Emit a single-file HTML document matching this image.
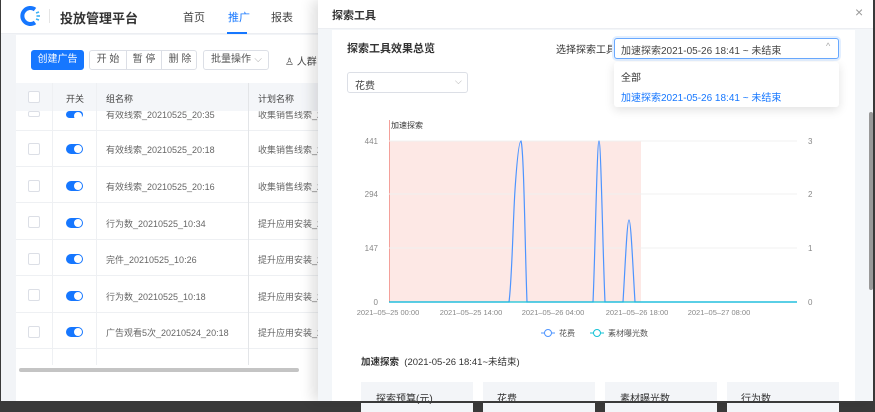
<!DOCTYPE html>
<html><head><meta charset="utf-8"><style>
*{margin:0;padding:0;box-sizing:border-box}
body{width:875px;height:403px;overflow:hidden;position:relative;background:#3a3a3a;font-family:"Liberation Sans","Noto Sans CJK SC",sans-serif;color:#333}
.a{position:absolute}
.t{position:absolute;white-space:nowrap}
.row{position:absolute;left:16px;width:302px;height:36px;border-bottom:1px solid #eef0f3;background:#fff}
.cb{position:absolute;left:28px;width:12px;height:12px;border:1px solid #dcdfe6;border-radius:2px;background:#fff}
.tg{position:absolute;left:66px;width:17px;height:10px;border-radius:5px;background:#1677ff}
.tg:after{content:"";position:absolute;right:1px;top:1px;width:8px;height:8px;border-radius:50%;background:#fff}
.btn{position:absolute;height:20px;border:1px solid #dcdfe6;border-radius:3px;background:#fff;font-size:10px;color:#555;line-height:18px;text-align:center}
.card{position:absolute;top:382px;width:112px;height:30px;background:#f3f5f8;font-size:10px;color:#333}
</style></head><body>
<div class="a" style="left:1px;top:0;width:872px;height:401px;background:#f2f4f7"></div>
<div class="a" style="left:1px;top:0;width:317px;height:34px;background:#fff;border-bottom:1px solid #eceef2"></div>
<svg class="a" style="left:19px;top:5px" width="22" height="22" viewBox="0 0 22 22"><path d="M16 4.5A8 8 0 1 0 16 17.5" fill="none" stroke="#1677ff" stroke-width="4"/><g stroke="#3ab0f5" stroke-width="1.6"><line x1="17" y1="8" x2="20" y2="7"/><line x1="17.5" y1="11" x2="21" y2="11"/><line x1="17" y1="14" x2="20" y2="15"/></g></svg>
<div class="a" style="left:49px;top:9px;width:1px;height:14px;background:#e5e5e5"></div>
<div class="t" style="left:60px;top:8px;font-size:13px;font-weight:bold;color:#333">投放管理平台</div>
<div class="t" style="left:183px;top:9px;font-size:11px;color:#444">首页</div>
<div class="t" style="left:228px;top:9px;font-size:11px;color:#1677ff">推广</div>
<div class="a" style="left:227px;top:32px;width:20px;height:2px;background:#1677ff"></div>
<div class="t" style="left:271px;top:9px;font-size:11px;color:#444">报表</div>
<div class="a" style="left:16px;top:35px;width:302px;height:366px;background:#fff"></div>
<div class="btn" style="left:31px;top:50px;width:53px;background:#1677ff;border-color:#1677ff;color:#fff">创建广告</div>
<div class="btn" style="left:89px;top:50px;width:108px"><span style="position:absolute;left:0;width:36px">开 始</span><span style="position:absolute;left:36px;width:36px;border-left:1px solid #dcdfe6;border-right:1px solid #dcdfe6">暂 停</span><span style="position:absolute;left:72px;width:36px">删 除</span></div>
<div class="btn" style="left:203px;top:50px;width:66px;text-align:left;padding-left:7px">批量操作 <span style="position:absolute;right:6px;color:#aaa">⌵</span></div>
<div class="t" style="left:285px;top:53px;font-size:10px;color:#444">♙ 人群</div>
<div class="a" style="left:16px;top:83px;width:302px;height:28px;background:#f4f6f9"></div>
<div class="cb" style="top:91px"></div>
<div class="t" style="left:66px;top:92px;font-size:9px;color:#444">开关</div>
<div class="t" style="left:106px;top:92px;font-size:9px;color:#444">组名称</div>
<div class="t" style="left:258px;top:92px;font-size:9px;color:#444">计划名称</div>
<div class="row" style="top:111px;height:20px"></div>
<div class="t" style="left:106px;top:108px;font-size:9px;color:#666;clip-path:inset(3px 0 0 0)">有效线索_20210525_20:35</div>
<div class="t" style="left:258px;top:108px;font-size:9px;color:#666;clip-path:inset(3px 0 0 0)">收集销售线索_2</div>
<div class="tg" style="top:111px;height:7px"></div>
<div class="cb" style="top:111px;height:6px"></div>
<div class="row" style="top:131px"></div><div class="cb" style="top:143px"></div><div class="tg" style="top:144px"></div><div class="t" style="left:106px;top:143px;font-size:9px;color:#666">有效线索_20210525_20:18</div><div class="t" style="left:258px;top:143px;font-size:9px;color:#666">收集销售线索_2</div>
<div class="row" style="top:167px"></div><div class="cb" style="top:180px"></div><div class="tg" style="top:181px"></div><div class="t" style="left:106px;top:180px;font-size:9px;color:#666">有效线索_20210525_20:16</div><div class="t" style="left:258px;top:180px;font-size:9px;color:#666">收集销售线索_2</div>
<div class="row" style="top:204px"></div><div class="cb" style="top:216px"></div><div class="tg" style="top:218px"></div><div class="t" style="left:106px;top:217px;font-size:9px;color:#666">行为数_20210525_10:34</div><div class="t" style="left:258px;top:217px;font-size:9px;color:#666">提升应用安装_2</div>
<div class="row" style="top:240px"></div><div class="cb" style="top:253px"></div><div class="tg" style="top:254px"></div><div class="t" style="left:106px;top:253px;font-size:9px;color:#666">完件_20210525_10:26</div><div class="t" style="left:258px;top:253px;font-size:9px;color:#666">提升应用安装_2</div>
<div class="row" style="top:277px"></div><div class="cb" style="top:289px"></div><div class="tg" style="top:291px"></div><div class="t" style="left:106px;top:290px;font-size:9px;color:#666">行为数_20210525_10:18</div><div class="t" style="left:258px;top:290px;font-size:9px;color:#666">提升应用安装_2</div>
<div class="row" style="top:313px"></div><div class="cb" style="top:326px"></div><div class="tg" style="top:327px"></div><div class="t" style="left:106px;top:326px;font-size:9px;color:#666">广告观看5次_20210524_20:18</div><div class="t" style="left:258px;top:326px;font-size:9px;color:#666">提升应用安装_2</div>
<div class="a" style="left:52px;top:83px;width:1px;height:282px;background:#eef0f3"></div>
<div class="a" style="left:96px;top:83px;width:1px;height:282px;background:#eef0f3"></div>
<div class="a" style="left:248px;top:83px;width:1px;height:282px;background:#e3e5e8"></div>
<div class="a" style="left:19px;top:368px;width:280px;height:4px;border-radius:2px;background:#c4c4c4"></div>
<div class="a" style="left:318px;top:0;width:555px;height:401px;background:#f3f6f9;box-shadow:-6px 0 12px rgba(0,0,0,.12)"></div>
<div class="a" style="left:318px;top:0;width:555px;height:29px;background:#fff;border-bottom:1px solid #eceef2"></div>
<div class="t" style="left:332px;top:7px;font-size:11px;font-weight:bold;color:#333">探索工具</div>
<div class="t" style="left:855px;top:4px;font-size:14px;color:#999">×</div>
<div class="a" style="left:332px;top:30px;width:523px;height:371px;background:#fff"></div>
<div class="a" style="left:869px;top:112px;width:4px;height:178px;border-radius:2px;background:#999"></div>
<div class="t" style="left:347px;top:40px;font-size:11px;font-weight:bold;color:#333">探索工具效果总览</div>
<div class="t" style="left:556px;top:41px;font-size:10px;color:#333">选择探索工具</div>
<div class="a" style="left:614px;top:38px;width:225px;height:21px;border:1px solid #69a9ff;border-radius:3px;box-shadow:0 0 0 2px #e3efff;background:#fff"></div>
<div class="t" style="left:621px;top:42px;font-size:10px;color:#444">加速探索2021-05-26 18:41 ~ 未结束</div>
<div class="t" style="left:826px;top:41px;font-size:9px;color:#aaa">^</div>
<div class="a" style="left:614px;top:62px;width:225px;height:45px;background:#fff;border-radius:3px;box-shadow:0 3px 10px rgba(0,0,0,.12)"></div>
<div class="t" style="left:621px;top:69px;font-size:10px;color:#333">全部</div>
<div class="t" style="left:621px;top:89px;font-size:10px;color:#1677ff">加速探索2021-05-26 18:41 ~ 未结束</div>
<div class="a" style="left:347px;top:72px;width:121px;height:21px;border:1px solid #dcdfe6;border-radius:3px"></div>
<div class="t" style="left:355px;top:77px;font-size:10px;color:#444">花费</div>
<div class="t" style="left:455px;top:76px;font-size:9px;color:#aaa">⌵</div>
<svg class="a" style="left:330px;top:110px" width="530" height="240" viewBox="330 110 530 240" font-family="Liberation Sans, Noto Sans CJK SC, sans-serif">
<rect x="389" y="141" width="252" height="161" fill="#fde8e5"/>
<line x1="389.5" y1="120" x2="389.5" y2="302" stroke="#f4a09a" stroke-width="1"/>
<text x="391" y="128" font-size="8" fill="#333">加速探索</text>
<g stroke="#f0f0f0"><line x1="389" y1="141" x2="797" y2="141"/><line x1="389" y1="194" x2="797" y2="194"/><line x1="389" y1="248" x2="797" y2="248"/></g>
<g font-size="8" fill="#888" text-anchor="end"><text x="378" y="144">441</text><text x="378" y="197">294</text><text x="378" y="251">147</text><text x="378" y="305">0</text></g>
<g font-size="8" fill="#888"><text x="808" y="144">3</text><text x="808" y="197">2</text><text x="808" y="251">1</text><text x="808" y="305">0</text></g>
<g font-size="7.5" fill="#888" text-anchor="middle"><text x="388" y="315">2021–05–25 00:00</text><text x="471" y="315">2021–05–25 14:00</text><text x="553" y="315">2021–05–26 04:00</text><text x="637" y="315">2021–05–26 18:00</text><text x="719" y="315">2021–05–27 08:00</text></g>
<path d="M389 302 L509 302 C512 280 513 220 515 190 C517 160 519 141 521 141 C524 150 525 250 527 302 L593 302 C595 260 597 141 599 141 C601 141 603 260 605 302 L623 302 C625 270 627 220 629 220 C631 220 633 270 635 302 L797 302" fill="none" stroke="#4d94ff" stroke-width="1.2"/>
<line x1="389" y1="302" x2="797" y2="302" stroke="#13c2d6" stroke-width="1.2"/>
<g font-size="8" fill="#555"><line x1="541" y1="333" x2="555" y2="333" stroke="#4d94ff"/><circle cx="548" cy="333" r="3.5" fill="#fff" stroke="#4d94ff"/><text x="559" y="336">花费</text>
<line x1="590" y1="333" x2="604" y2="333" stroke="#13c2d6"/><circle cx="597" cy="333" r="3.5" fill="#fff" stroke="#13c2d6"/><text x="608" y="336">素材曝光数</text></g>
</svg>
<div class="t" style="left:361px;top:354px;font-size:9.5px;color:#333"><b>加速探索</b>&nbsp; (2021-05-26 18:41~未结束)</div>
<div class="card" style="left:361px"><span style="position:absolute;left:15px;top:8px">探索预算(元)</span></div>
<div class="card" style="left:483px"><span style="position:absolute;left:14px;top:8px">花费</span></div>
<div class="card" style="left:605px"><span style="position:absolute;left:15px;top:8px">素材曝光数</span></div>
<div class="card" style="left:727px"><span style="position:absolute;left:14px;top:8px">行为数</span></div>
<div class="a" style="left:0;top:401px;width:875px;height:2px;background:#3a3a3a"></div>
</body></html>
